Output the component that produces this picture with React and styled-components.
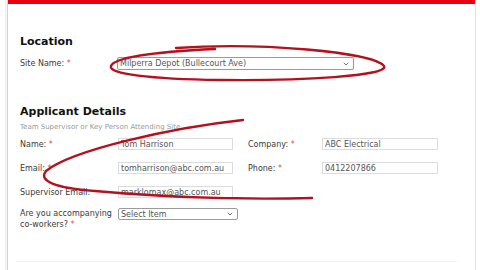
import React from "react";
import styled, { createGlobalStyle } from "styled-components";
import { ChevronDown } from "lucide-react";

const Global = createGlobalStyle`
    body {
        margin: 0;
        background: #fff;
        font-family: "DejaVu Sans", Verdana, sans-serif;
    }
`

const Frame = styled.div`
    position: relative;
    margin-left: 7px;
    width: 467px;
    height: 270px;
    border-left: 1px solid #d4d4d4;
    border-right: 1px solid #e2e2e2;
    box-shadow: -2px 0 0 #f2f2f2;
    overflow: hidden;
`

const TopBar = styled.div`
    height: 4px;
    background: #e8000f;
`

const Section = styled.div`
    padding: ${p => p.$top}px 0 0 12px;
`

const Heading = styled.h2`
    margin: 0;
    font-size: 11px;
    line-height: 14px;
    font-weight: bold;
    color: #111;
`

const Sub = styled.div`
    margin-top: 4px;
    font-size: 7px;
    line-height: 8px;
    color: #9a9a9a;
`

const Row = styled.div`
    display: flex;
    align-items: ${p => p.$top ? "flex-start" : "center"};
    height: ${p => p.$h || 12}px;
    margin-top: ${p => p.$mt}px;
`

const Label = styled.div`
    width: ${p => p.$w}px;
    margin-left: ${p => p.$ml || 0}px;
    flex-shrink: 0;
    font-size: 8px;
    line-height: 11px;
    color: #3a3a3a;

    span {
        color: #d9534f;
    }
`

const Field = styled.input`
    box-sizing: border-box;
    width: ${p => p.$w}px;
    height: 12px;
    padding: 0 2px;
    border: 1px solid #dcdcdc;
    font-family: inherit;
    font-size: 8px;
    color: #555;
    outline: none;
`

const SelectBox = styled.div`
    box-sizing: border-box;
    display: flex;
    align-items: center;
    justify-content: space-between;
    width: ${p => p.$w}px;
    height: ${p => p.$h}px;
    padding: 0 3px 0 2px;
    border: 1px solid #9a9a9a;
    border-radius: 2px;
    background: #fff;
    font-size: 8px;
    color: #555;
    white-space: nowrap;
`

const Divider = styled.div`
    margin: 31px 0 0 -4px;
    width: 441px;
    height: 1px;
    background: #f1f1f1;
`

const Marks = styled.svg`
    position: absolute;
    left: -8px;
    top: 0;
    pointer-events: none;
`

function Select({ w, h, value }) {
    return (
        <SelectBox $w={w} $h={h} role="combobox">
            <span>{value}</span>
            <ChevronDown size={8} strokeWidth={2.5} color="#555" />
        </SelectBox>
    )
}

export default function App() {
    return (
        <>
            <Global />
            <Frame>
                <TopBar />
                <Section $top={31}>
                    <Heading>Location</Heading>
                    <Row $mt={8} $h={13}>
                        <Label $w={97}>Site Name: <span>*</span></Label>
                        <Select w={237} h={13} value="Milperra Depot (Bullecourt Ave)" />
                    </Row>
                </Section>
                <Section $top={35}>
                    <Heading>Applicant Details</Heading>
                    <Sub>Team Supervisor or Key Person Attending Site</Sub>
                    <Row $mt={7}>
                        <Label $w={98}>Name: <span>*</span></Label>
                        <Field $w={115} readOnly value="Tom Harrison" />
                        <Label $w={74} $ml={15}>Company: <span>*</span></Label>
                        <Field $w={116} readOnly value="ABC Electrical" />
                    </Row>
                    <Row $mt={12}>
                        <Label $w={98}>Email: <span>*</span></Label>
                        <Field $w={115} readOnly value="tomharrison@abc.com.au" />
                        <Label $w={74} $ml={15}>Phone: <span>*</span></Label>
                        <Field $w={116} readOnly value="0412207866" />
                    </Row>
                    <Row $mt={12}>
                        <Label $w={98}>Supervisor Email:</Label>
                        <Field $w={115} readOnly value="marklomax@abc.com.au" />
                    </Row>
                    <Row $mt={10} $h={22} $top>
                        <Label $w={98}>Are you accompanying<br />co-workers? <span>*</span></Label>
                        <Select w={120} h={12} value="Select Item" />
                    </Row>
                    <Divider />
                </Section>
                <Marks width="480" height="270" viewBox="0 0 480 270">
                    <g fill="none" stroke="#b5101e" strokeWidth="2.4" strokeLinecap="round">
                        <path d="M 176 48 C 260 42, 372 52, 384 66 C 390 76, 300 81, 220 80 C 150 79, 108 74, 111 66 C 114 58, 150 52, 215 49" />
                        <path d="M 243 120 C 170 128, 72 150, 46 171 C 38 181, 55 188, 95 191 C 150 196, 230 200, 312 198" />
                    </g>
                </Marks>
            </Frame>
        </>
    )
}
